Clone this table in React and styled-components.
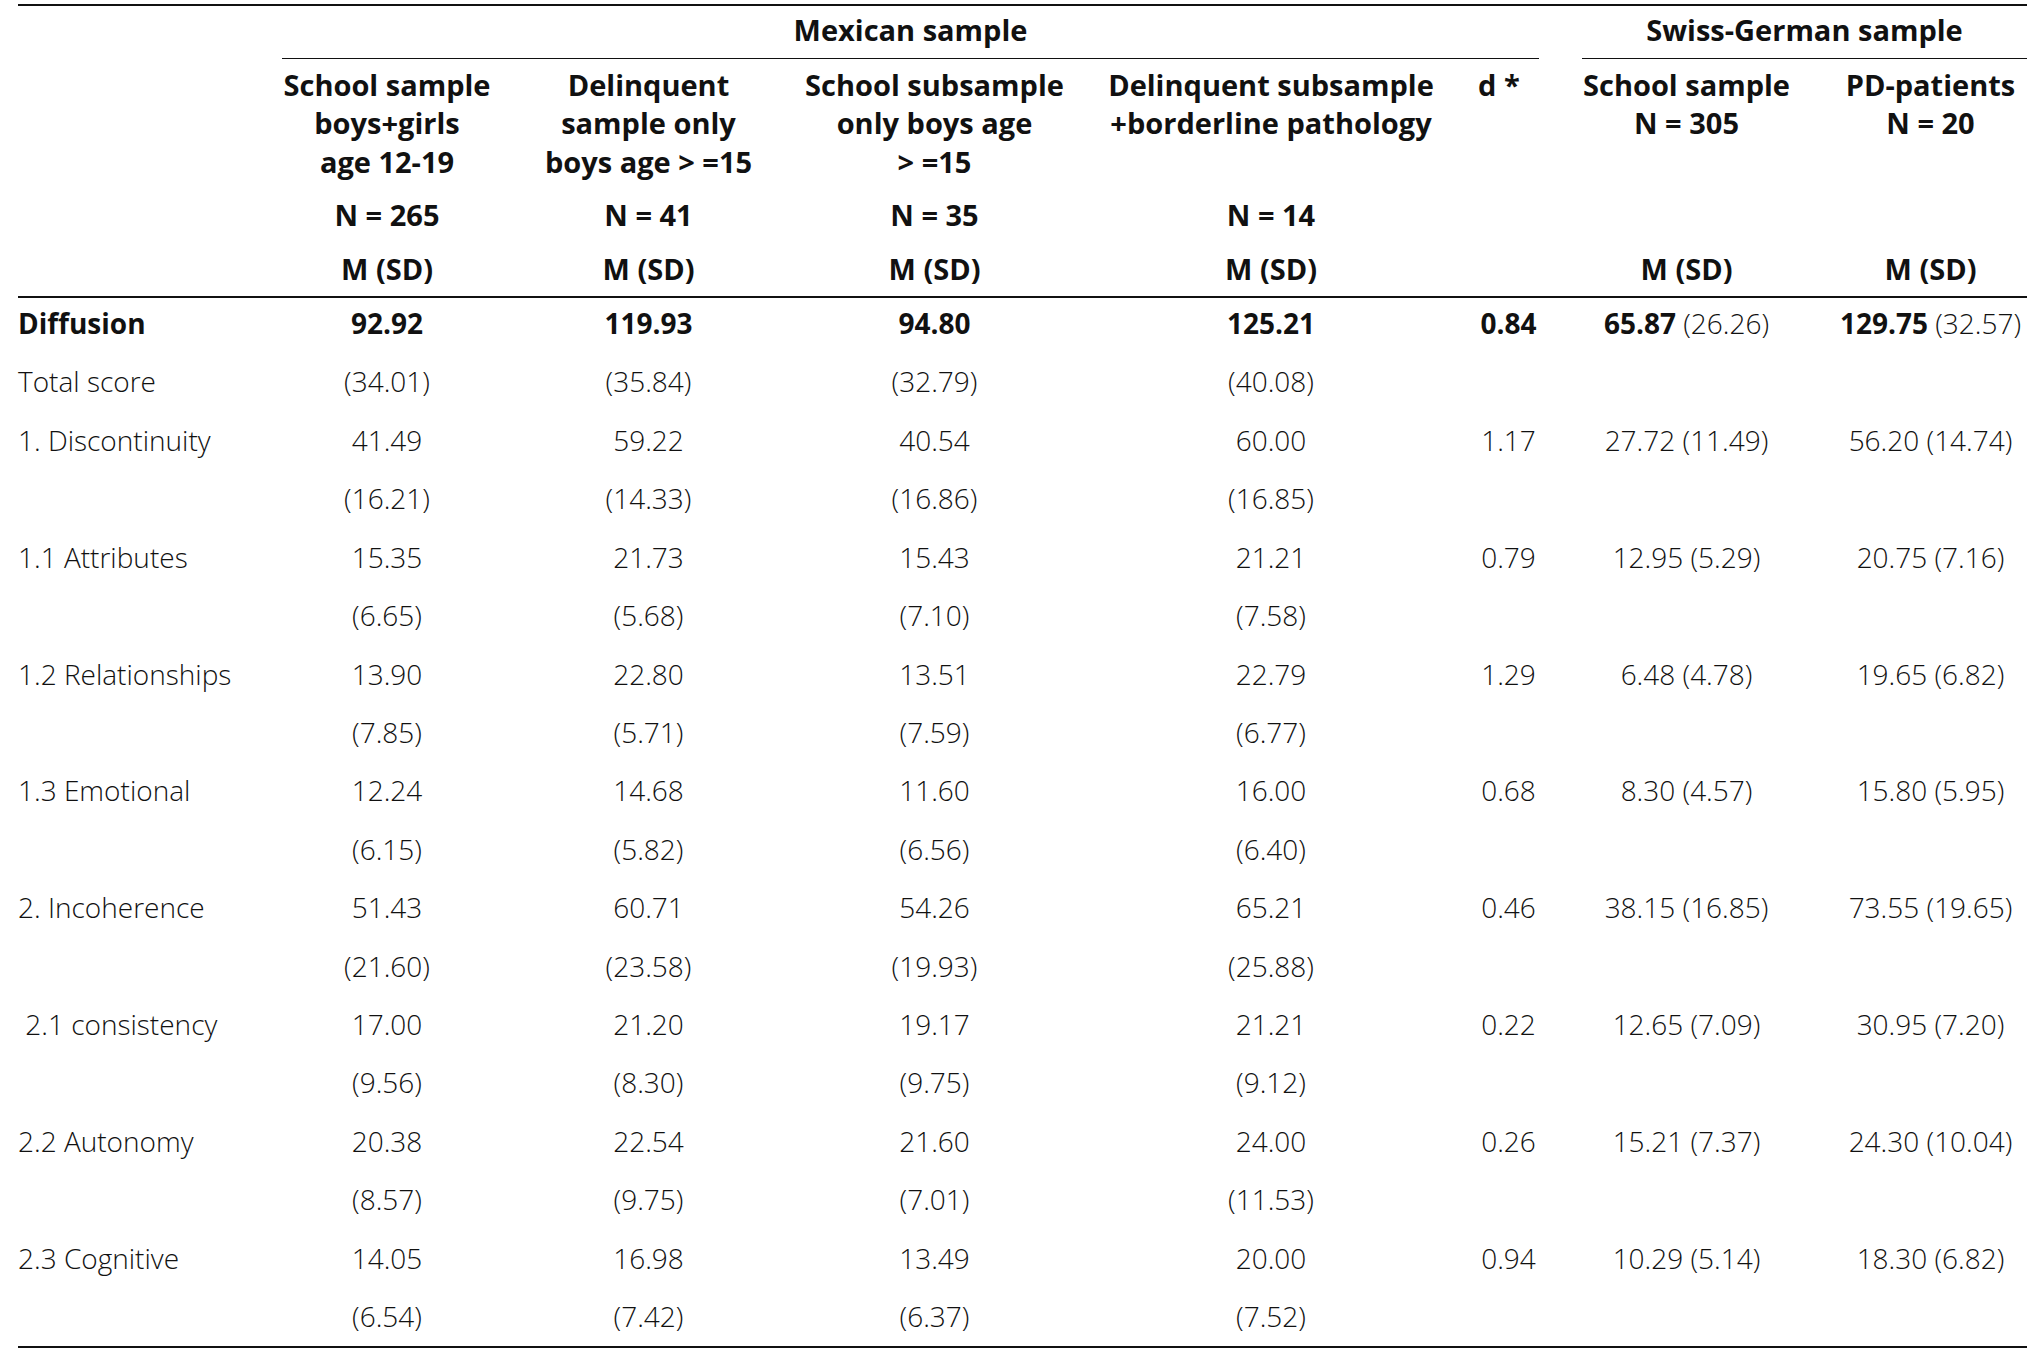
import React from "react";
import styled, { createGlobalStyle } from "styled-components";

const Global = createGlobalStyle`
  html, body { margin: 0; padding: 0; background: #ffffff; }
  body { font-family: "Open Sans", "Liberation Sans", sans-serif; color: #111111; }
`;

const COLS = "221px 210px 227px 259px 328px 61px 209px 193px";

const Table = styled.div`
  width: 2009px;
  margin: 4px 0 0 18px;
  border-top: 2px solid #111111;
  border-bottom: 2px solid #111111;
  font-size: 28px;
`;

const Head = styled.div`
  border-bottom: 2px solid #111111;
  padding-bottom: 8px;
  font-size: 29px;
`;

const Row = styled.div`
  display: grid;
  grid-template-columns: ${COLS};
  column-gap: 43px;
  align-items: ${(p) => (p.$align ? p.$align : "center")};
  padding-top: ${(p) => p.$pt || 0}px;
`;

const DataRow = styled.div`
  display: grid;
  grid-template-columns: ${COLS};
  column-gap: 43px;
  align-items: start;
  box-sizing: border-box;
  height: 58.43px;
  padding-top: 6px;
  &:last-child {
    height: 54.5px;
  }
`;

const GroupHead = styled.div`
  grid-column: ${(p) => p.$span};
  text-align: center;
  font-weight: 700;
  line-height: 38.5px;
  padding: 5px 0 8px;
  border-bottom: 1px solid #111111;
`;

const HeadCell = styled.div`
  grid-column: ${(p) => p.$col};
  text-align: ${(p) => (p.$left ? "left" : "center")};
  font-weight: 700;
  line-height: 38.5px;
  white-space: nowrap;
`;

const Label = styled.div`
  font-weight: ${(p) => (p.$bold ? 700 : 300)};
  white-space: pre;
  line-height: 38px;
`;

const Cell = styled.div`
  text-align: center;
  font-weight: ${(p) => (p.$bold ? 700 : 300)};
  white-space: nowrap;
  line-height: 38px;
`;

const Strong = styled.span`
  font-weight: 700;
`;

const Light = styled.span`
  font-weight: 300;
`;

const rows = [
  { label: "Diffusion", bold: true, v: ["92.92", "119.93", "94.80", "125.21"], d: "0.84", s1: ["65.87", "(26.26)"], s2: ["129.75", "(32.57)"] },
  { label: "Total score", v: ["(34.01)", "(35.84)", "(32.79)", "(40.08)"] },
  { label: "1. Discontinuity", v: ["41.49", "59.22", "40.54", "60.00"], d: "1.17", s1: "27.72 (11.49)", s2: "56.20 (14.74)" },
  { label: "", v: ["(16.21)", "(14.33)", "(16.86)", "(16.85)"] },
  { label: "1.1 Attributes", v: ["15.35", "21.73", "15.43", "21.21"], d: "0.79", s1: "12.95 (5.29)", s2: "20.75 (7.16)" },
  { label: "", v: ["(6.65)", "(5.68)", "(7.10)", "(7.58)"] },
  { label: "1.2 Relationships", v: ["13.90", "22.80", "13.51", "22.79"], d: "1.29", s1: "6.48 (4.78)", s2: "19.65 (6.82)" },
  { label: "", v: ["(7.85)", "(5.71)", "(7.59)", "(6.77)"] },
  { label: "1.3 Emotional", v: ["12.24", "14.68", "11.60", "16.00"], d: "0.68", s1: "8.30 (4.57)", s2: "15.80 (5.95)" },
  { label: "", v: ["(6.15)", "(5.82)", "(6.56)", "(6.40)"] },
  { label: "2. Incoherence", v: ["51.43", "60.71", "54.26", "65.21"], d: "0.46", s1: "38.15 (16.85)", s2: "73.55 (19.65)" },
  { label: "", v: ["(21.60)", "(23.58)", "(19.93)", "(25.88)"] },
  { label: " 2.1 consistency", v: ["17.00", "21.20", "19.17", "21.21"], d: "0.22", s1: "12.65 (7.09)", s2: "30.95 (7.20)" },
  { label: "", v: ["(9.56)", "(8.30)", "(9.75)", "(9.12)"] },
  { label: "2.2 Autonomy", v: ["20.38", "22.54", "21.60", "24.00"], d: "0.26", s1: "15.21 (7.37)", s2: "24.30 (10.04)" },
  { label: "", v: ["(8.57)", "(9.75)", "(7.01)", "(11.53)"] },
  { label: "2.3 Cognitive", v: ["14.05", "16.98", "13.49", "20.00"], d: "0.94", s1: "10.29 (5.14)", s2: "18.30 (6.82)" },
  { label: "", v: ["(6.54)", "(7.42)", "(6.37)", "(7.52)"] },
];

function Mixed({ value }) {
  if (Array.isArray(value)) {
    return (
      <>
        <Strong>{value[0]}</Strong> <Light>{value[1]}</Light>
      </>
    );
  }
  return value || "";
}

export default function App() {
  return (
    <>
      <Global />
      <Table>
        <Head>
          <Row $align="end">
            <GroupHead $span="2 / 7">Mexican sample</GroupHead>
            <GroupHead $span="7 / 9">Swiss-German sample</GroupHead>
          </Row>
          <Row $align="start" $pt={7}>
            <HeadCell $col="2">School sample<br />boys+girls<br />age 12-19</HeadCell>
            <HeadCell $col="3">Delinquent<br />sample only<br />boys age &gt; =15</HeadCell>
            <HeadCell $col="4">School subsample<br />only boys age<br />&gt; =15</HeadCell>
            <HeadCell $col="5">Delinquent subsample<br />+borderline pathology</HeadCell>
            <HeadCell $col="6" $left>d *</HeadCell>
            <HeadCell $col="7">School sample<br />N = 305</HeadCell>
            <HeadCell $col="8">PD-patients<br />N = 20</HeadCell>
          </Row>
          <Row $pt={15}>
            <HeadCell $col="2">N = 265</HeadCell>
            <HeadCell $col="3">N = 41</HeadCell>
            <HeadCell $col="4">N = 35</HeadCell>
            <HeadCell $col="5">N = 14</HeadCell>
          </Row>
          <Row $pt={15}>
            <HeadCell $col="2">M (SD)</HeadCell>
            <HeadCell $col="3">M (SD)</HeadCell>
            <HeadCell $col="4">M (SD)</HeadCell>
            <HeadCell $col="5">M (SD)</HeadCell>
            <HeadCell $col="7">M (SD)</HeadCell>
            <HeadCell $col="8">M (SD)</HeadCell>
          </Row>
        </Head>
        {rows.map((r, i) => (
          <DataRow key={i}>
            <Label $bold={r.bold}>{r.label}</Label>
            {r.v.map((x, j) => (
              <Cell key={j} $bold={r.bold}>{x}</Cell>
            ))}
            <Cell $bold={r.bold}>{r.d || ""}</Cell>
            <Cell><Mixed value={r.s1} /></Cell>
            <Cell><Mixed value={r.s2} /></Cell>
          </DataRow>
        ))}
      </Table>
    </>
  );
}
